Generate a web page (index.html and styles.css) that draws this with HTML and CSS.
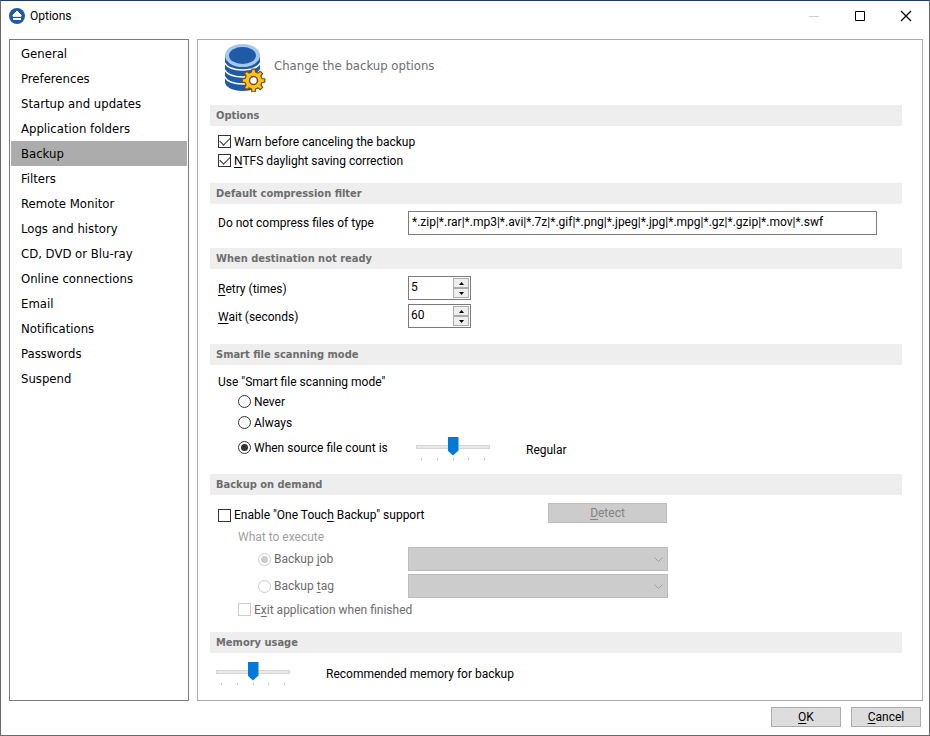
FILE: index.html
```html
<!DOCTYPE html>
<html lang="en">
<head>
<meta charset="utf-8">
<title>Options</title>
<link rel="stylesheet" href="styles.css">
</head>
<body>
<div class="window">
  <header class="titlebar">
    <svg class="app-icon" viewBox="0 0 16 16" aria-hidden="true">
      <circle cx="8" cy="8" r="8" fill="#1f5aa6"/>
      <path d="M8 3L12 7V8.300H4V7Z" fill="#fff" stroke="#fff" stroke-linejoin="round"/>
      <rect x="4" y="10" width="8" height="2" fill="#fff"/>
    </svg>
    <h1 class="title">Options</h1>
    <div class="window-buttons">
      <button type="button" class="window-button" aria-label="Minimize" disabled><svg viewBox="0 0 10 10"><path d="M0 5.500H10" stroke="#ccc"/></svg></button>
      <button type="button" class="window-button" aria-label="Maximize"><svg viewBox="0 0 10 10"><path d="M.5.5H9.500V9.500H.5Z" fill="none" stroke="#000"/></svg></button>
      <button type="button" class="window-button" aria-label="Close"><svg viewBox="0 0 10 10"><path d="M0 0L10 10M10 0L0 10" stroke="#000" stroke-width="1.200"/></svg></button>
    </div>
  </header>

  <div class="content">
    <nav class="sidebar">
      <a href="#general">General</a>
      <a href="#preferences">Preferences</a>
      <a href="#startup">Startup and updates</a>
      <a href="#folders">Application folders</a>
      <a href="#backup" class="current" aria-current="page">Backup</a>
      <a href="#filters">Filters</a>
      <a href="#remote">Remote Monitor</a>
      <a href="#logs">Logs and history</a>
      <a href="#discs">CD, DVD or Blu-ray</a>
      <a href="#online">Online connections</a>
      <a href="#email">Email</a>
      <a href="#notifications">Notifications</a>
      <a href="#passwords">Passwords</a>
      <a href="#suspend">Suspend</a>
    </nav>

    <main class="panel">
      <div class="intro">
        <svg class="intro-icon" viewBox="0 0 42 48" aria-hidden="true">
          <path d="M1 11V38C1 43 9 47 18.500 47S36 43 36 38V11Z" fill="#1f5aa6"/>
          <g fill="none" stroke="#fff" stroke-width="1.500">
            <path d="M0 18C3 24 10 26 18.500 26S34 24 37 18"/>
            <path d="M0 25C3 31 10 33 18.500 33S34 31 37 25"/>
            <path d="M0 32C3 38 10 40 18.500 40S34 38 37 32"/>
          </g>
          <ellipse cx="18.500" cy="11.500" rx="17.500" ry="11.500" fill="#a6c8f0"/>
          <ellipse cx="18.500" cy="11.500" rx="13.500" ry="8.500" fill="#1f5aa6"/>
          <g transform="translate(29.500 36.500)">
            <g fill="#fcc419" stroke="#7a4a10" stroke-width="1.200" stroke-linejoin="round">
              <path d="M-2-8.500L-1.700-11.300H1.700L2-8.500L4.600-7.400L6.800-9.200L9.200-6.800L7.400-4.600L8.500-2L11.300-1.700V1.700L8.500 2L7.400 4.600L9.200 6.800L6.800 9.200L4.600 7.400L2 8.500L1.700 11.300H-1.700L-2 8.500L-4.600 7.400L-6.800 9.200L-9.200 6.800L-7.400 4.600L-8.500 2L-11.300 1.700V-1.700L-8.500-2L-7.400-4.600L-9.200-6.800L-6.800-9.200L-4.600-7.400Z"/>
            </g>
            <circle r="4" fill="#fff" stroke="#6b4a24" stroke-width="1.500"/>
          </g>
        </svg>
        <p>Change the backup options</p>
      </div>

      <section>
        <h2>Options</h2>
        <div class="body options">
          <label class="check"><input type="checkbox" checked>Warn before canceling the backup</label>
          <label class="check"><input type="checkbox" checked><span><u>N</u>TFS daylight saving correction</span></label>
        </div>
      </section>

      <section>
        <h2>Default compression filter</h2>
        <div class="body fields filter">
          <label for="types">Do not compress files of type</label>
          <input id="types" class="text" type="text" value="*.zip|*.rar|*.mp3|*.avi|*.7z|*.gif|*.png|*.jpeg|*.jpg|*.mpg|*.gz|*.gzip|*.mov|*.swf">
        </div>
      </section>

      <section>
        <h2>When destination not ready</h2>
        <div class="body fields retry">
          <label for="retry"><u>R</u>etry (times)</label>
          <div class="spin">
            <input id="retry" type="number" value="5">
            <div class="spin-buttons">
              <button type="button" aria-label="More retries"><svg viewBox="0 0 5 3"><path d="M0 3L2.500 0L5 3Z"/></svg></button>
              <button type="button" aria-label="Fewer retries"><svg viewBox="0 0 5 3"><path d="M0 0L2.500 3L5 0Z"/></svg></button>
            </div>
          </div>
          <label for="wait"><u>W</u>ait (seconds)</label>
          <div class="spin">
            <input id="wait" type="number" value="60">
            <div class="spin-buttons">
              <button type="button" aria-label="Wait longer"><svg viewBox="0 0 5 3"><path d="M0 3L2.500 0L5 3Z"/></svg></button>
              <button type="button" aria-label="Wait less"><svg viewBox="0 0 5 3"><path d="M0 0L2.500 3L5 0Z"/></svg></button>
            </div>
          </div>
        </div>
      </section>

      <section>
        <h2>Smart file scanning mode</h2>
        <div class="body scanning">
          <p>Use "Smart file scanning mode"</p>
          <label class="check level-1"><input type="radio" name="scan">Never</label>
          <label class="check level-1"><input type="radio" name="scan">Always</label>
          <div class="slider-row scan-count">
            <label class="check level-1"><input type="radio" name="scan" checked>When source file count is</label>
            <div class="slider">
              <input id="count" type="range" min="0" max="4" value="2" aria-label="Source file count">
              <div class="ticks"><i></i><i></i><i></i><i></i><i></i></div>
            </div>
            <output for="count">Regular</output>
          </div>
        </div>
      </section>

      <section>
        <h2>Backup on demand</h2>
        <div class="body demand">
          <div class="touch">
            <label class="check"><input type="checkbox"><span>Enable "One Touc<u>h</u> Backup" support</span></label>
            <button type="button" class="button detect" disabled><u>D</u>etect</button>
          </div>
          <p class="level-1 muted">What to execute</p>
          <div class="fields jobs">
            <label class="check level-2 off"><input type="radio" name="run" checked disabled><span>Backup <u>j</u>ob</span></label>
            <div class="combo">
              <select aria-label="Backup job" disabled></select>
              <svg viewBox="0 0 9 5" aria-hidden="true"><path d="M.5.5L4.500 4.500L8.500.5"/></svg>
            </div>
            <label class="check level-2 off"><input type="radio" name="run" disabled><span>Backup <u>t</u>ag</span></label>
            <div class="combo">
              <select aria-label="Backup tag" disabled></select>
              <svg viewBox="0 0 9 5" aria-hidden="true"><path d="M.5.5L4.500 4.500L8.500.5"/></svg>
            </div>
          </div>
          <label class="check level-1 off exit"><input type="checkbox" disabled><span>E<u>x</u>it application when finished</span></label>
        </div>
      </section>

      <section>
        <h2>Memory usage</h2>
        <div class="slider-row memory">
          <div class="slider">
            <input id="memory" type="range" min="0" max="4" value="2" aria-label="Memory usage">
            <div class="ticks"><i></i><i></i><i></i><i></i><i></i></div>
          </div>
          <output for="memory">Recommended memory for backup</output>
        </div>
      </section>
    </main>
  </div>

  <footer class="footer">
    <button type="button" class="button"><u>O</u>K</button>
    <button type="button" class="button"><u>C</u>ancel</button>
  </footer>
</div>
</body>
</html>
```
FILE: styles.css
```css
:root {
  --ui: Roboto, "Segoe UI", sans-serif;
  --wide: "DejaVu Sans Condensed", Tahoma, sans-serif;
}

* { box-sizing: border-box; }

body {
  margin: 0;
  background: #fff;
  color: #000;
  font: 12px/18px var(--ui);
}

h1, h2, p { margin: 0; font: inherit; }

input, button, select {
  margin: 0;
  font: inherit;
  color: inherit;
}

u { text-underline-offset: 2px; text-decoration-skip-ink: none; }

.window {
  display: flex;
  flex-direction: column;
  min-height: 100vh;
  border: 1px solid #6a6a6a;
  border-top-color: #1c3d5e;
}

/* Title bar */
.titlebar {
  display: flex;
  align-items: center;
  height: 30px;
  padding-left: 8px;
}

.app-icon { width: 16px; height: 16px; margin-right: 5px; }
.title { flex: 1; }
.window-buttons { display: flex; }

.window-button {
  display: grid;
  place-items: center;
  width: 46px;
  height: 30px;
  padding: 0;
  border: 0;
  background: none;
}

.window-button svg { width: 10px; height: 10px; overflow: visible; }

/* Main area */
.content {
  display: flex;
  flex: 1;
  gap: 8px;
  padding: 8px 6px 0 8px;
}

.sidebar {
  flex: 0 0 180px;
  padding: 1px;
  border: 1px solid #7a7a7a;
  font: 13px/25px var(--wide);
}

.sidebar a {
  display: block;
  padding-left: 10px;
  color: #000;
  text-decoration: none;
}

.sidebar .current { background: #acacac; }

.panel {
  flex: 1;
  padding: 0 20px 0 12px;
  border: 1px solid #acacac;
}

.intro {
  display: flex;
  gap: 8px;
  height: 65px;
  padding: 4px 0 0 14px;
  color: #6d6d6d;
  font: 13px/44px var(--wide);
}

.intro-icon { width: 42px; height: 48px; }

h2 {
  padding-left: 6px;
  background: #eee;
  color: #6d6d6d;
  font: bold 11px/21px var(--wide);
}

.body { padding-left: 8px; }
.options { padding-top: 6px; padding-bottom: 13px; }

.check {
  display: flex;
  align-items: center;
  gap: 3px;
  height: 19px;
}

.level-1 { margin-left: 20px; }
.level-2 { margin-left: 46px; }
.muted { color: #a0a0a0; }
.off { color: #6d6d6d; }

.check input {
  display: grid;
  place-items: center;
  flex: none;
  appearance: none;
  width: 13px;
  height: 13px;
  border: 1px solid #333;
  background: #fff;
}

.check input:disabled { border-color: #ccc; }
.check [type="radio"] { border-radius: 50%; }

.check [type="radio"]:checked::before {
  content: "";
  width: 7px;
  height: 7px;
  border-radius: 50%;
  background: #333;
}

.check [type="radio"]:checked:disabled::before { background: #ccc; }

.check [type="checkbox"]:checked::before {
  content: "";
  width: 9px;
  height: 5px;
  margin-bottom: 3px;
  border: solid #333;
  border-width: 0 0 1px 1px;
  transform: rotate(-45deg);
}

/* Label and field pairs */
.fields {
  display: grid;
  grid-template-columns: 190px 1fr;
  align-items: center;
}

.filter { padding-top: 7px; padding-bottom: 13px; padding-right: 25px; }

.text {
  width: 100%;
  height: 24px;
  padding: 0 3px 2px;
  border: 1px solid #7a7a7a;
  background: #fff;
}

.retry { row-gap: 4px; padding-top: 7px; padding-bottom: 16px; }
.retry label { padding-top: 2px; }

.spin {
  display: flex;
  width: 63px;
  height: 24px;
  padding: 1px;
  border: 1px solid #7a7a7a;
}

.spin input {
  flex: 1;
  min-width: 0;
  padding: 0 1px 2px;
  border: 0;
  background: none;
  appearance: textfield;
}

.spin-buttons { display: grid; width: 16px; }

.spin-buttons button {
  display: grid;
  place-items: center;
  padding: 0;
  border: 1px solid #acacac;
  background: #eee;
}

.spin-buttons svg { width: 5px; height: 3px; }

/* Sliders */
.slider-row { display: flex; }
.slider { flex: none; width: 74px; }

.slider input {
  display: block;
  appearance: none;
  width: 100%;
  height: 19px;
  background: none;
}

.slider input::-webkit-slider-runnable-track {
  height: 4px;
  border: 1px solid #d6d6d6;
  background: #e7eaea;
}

.slider input::-webkit-slider-thumb {
  appearance: none;
  width: 11px;
  height: 19px;
  margin-top: -9px;
  background: #0078d7;
  clip-path: polygon(0 0, 100% 0, 100% 74%, 50% 100%, 0 74%);
}

.ticks {
  display: flex;
  justify-content: space-between;
  margin: 2px 5px 0;
}

.ticks i { width: 1px; height: 2px; background: #c4c4c4; }

.scanning { padding-top: 8px; padding-bottom: 12px; }
.scanning > .check { height: 21px; }
.scan-count { align-items: center; height: 29px; }
.scan-count .check { width: 178px; height: 27px; }
.scan-count .slider { margin-top: 2px; }
.scan-count output { margin-left: 36px; padding-top: 4px; }

.demand { padding-top: 8px; padding-bottom: 13px; }
.touch { display: flex; align-items: center; }
.touch .check { width: 330px; height: 24px; }

.button {
  height: 20px;
  padding: 0;
  border: 1px solid #acacac;
  background: #ddd;
  line-height: 16px;
}

.button:disabled { border-color: #bcbcbc; background: #ccc; color: #838383; }
.detect { width: 119px; align-self: flex-start; }
.demand .muted { line-height: 20px; }
.jobs { row-gap: 3px; }
.jobs .level-2 { margin-left: 40px; }

.combo { position: relative; width: 260px; height: 24px; }

.combo select {
  display: block;
  appearance: none;
  width: 100%;
  height: 100%;
  border: 1px solid #bcbcbc;
  border-radius: 0;
  background: #ccc;
  opacity: 1;
}

.combo svg {
  position: absolute;
  top: 10px;
  right: 5px;
  width: 9px;
  height: 5px;
  fill: none;
  stroke: #a0a0a0;
  pointer-events: none;
}

.exit { margin-top: 2px; }
.memory { gap: 36px; padding: 9px 0 0 6px; }
.memory output { padding-top: 3px; }

.footer {
  display: flex;
  justify-content: flex-end;
  gap: 10px;
  padding: 6px 8px 8px;
}

.footer .button { width: 70px; }
```
